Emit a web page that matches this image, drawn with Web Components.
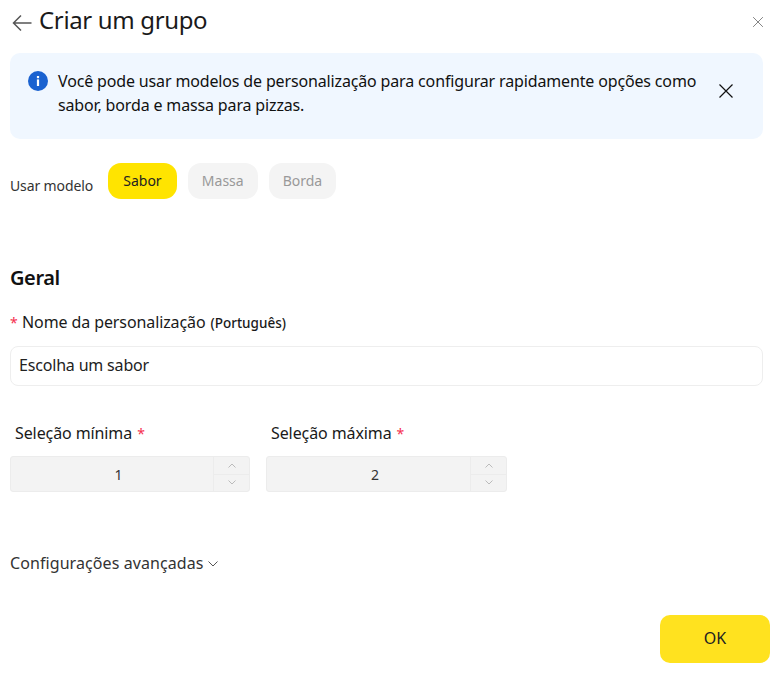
<!DOCTYPE html>
<html lang="pt">
<head>
<meta charset="utf-8">
<title>Criar um grupo</title>
<style>
html, body { margin: 0; padding: 0; background: #fff; }
body { font-family: "Noto Sans", sans-serif; color: #1a1a1a; }
</style>
</head>
<body>
<group-form></group-form>
<script>
const closeIcon = (size, color) => `<svg width="${size}" height="${size}" viewBox="0 0 16 16" fill="none" stroke="${color}" stroke-width="1.2"><path d="M1.5 1.5l13 13M14.5 1.5l-13 13"/></svg>`;

class PageHeader extends HTMLElement {
  constructor() {
    super();
    this.attachShadow({ mode: 'open' }).innerHTML = `
<style>
:host { display: flex; align-items: center; height: 44px; padding: 0 20px 0 11.5px; color: #1a1a1a; }
svg { display: block; }
.back { margin-right: 7.5px; margin-top: 2px; }
h1 { flex: 1; margin: -4px 0 0; font-size: 24px; font-weight: 400; line-height: 44px; letter-spacing: -.35px; }
</style>
<svg class="back" width="20" height="18" viewBox="0 0 20 18" fill="none" stroke="#555" stroke-width="1.5"><path d="M19.5 9H1.5M9 1.5L1.5 9L9 16.5"/></svg>
<h1><slot></slot></h1>
${closeIcon(12, '#777')}`;
  }
}

class InfoBanner extends HTMLElement {
  constructor() {
    super();
    this.attachShadow({ mode: 'open' }).innerHTML = `
<style>
:host { display: flex; box-sizing: border-box; width: 753px; height: 86px; margin: 9px 0 0 10px; padding: 16px 29px 0 18px; background: #f0f7ff; border-radius: 10px; color: #111; }
.icon { flex: none; margin: 2px 10px 0 0; }
.text { flex: 1; font-size: 16px; line-height: 24px; letter-spacing: -.15px; }
.close { flex: none; margin: 14px 0 0 0; }
svg { display: block; }
</style>
<svg class="icon" width="20" height="20" viewBox="0 0 20 20"><circle cx="10" cy="10" r="10" fill="#1a62d0"/><rect x="8.9" y="8.4" width="2.2" height="6.6" fill="#fff"/><rect x="8.9" y="5" width="2.2" height="2.2" fill="#fff"/></svg>
<div class="text"><slot></slot></div>
<div class="close">${closeIcon(16, '#111')}</div>`;
  }
}

class ChipButton extends HTMLElement {
  constructor() {
    super();
    this.attachShadow({ mode: 'open' }).innerHTML = `
<style>
:host { display: flex; align-items: center; justify-content: center; box-sizing: border-box; height: 36px; padding: 0 14px 2px; border-radius: 13px; background: #f4f4f4; color: #999; font-size: 14px; }
:host([active]) { background: #ffe400; color: #222; padding: 0 15.2px 2px; }
</style>
<slot></slot>`;
  }
}

class FieldLabel extends HTMLElement {
  constructor() {
    super();
    this.attachShadow({ mode: 'open' }).innerHTML = `
<style>
:host { display: block; font-size: 16px; line-height: 22px; letter-spacing: -.1px; color: #1a1a1a; }
</style>
<slot name="before"></slot><slot></slot>`;
  }
}

class NumberField extends HTMLElement {
  constructor() {
    super();
    this.attachShadow({ mode: 'open' }).innerHTML = `
<style>
:host { display: flex; box-sizing: border-box; height: 36px; background: #f3f3f3; border: 1px solid #ececec; border-radius: 3px; color: #333; font-size: 14px; }
.value { flex: 1; display: flex; align-items: center; justify-content: center; padding-left: 13px; }
.steps { flex: none; width: 35px; display: flex; flex-direction: column; border-left: 1px solid #ececec; }
.steps div { flex: 1; display: flex; align-items: center; justify-content: center; }
.steps div + div { border-top: 1px solid #ececec; }
svg { display: block; }
</style>
<div class="value"><slot></slot></div>
<div class="steps">
  <div><svg width="8" height="5" viewBox="0 0 8 5" fill="none" stroke="#bbb"><path d="M.5 4.5L4 1l3.5 3.5"/></svg></div>
  <div><svg width="8" height="5" viewBox="0 0 8 5" fill="none" stroke="#bbb"><path d="M.5.5L4 4 7.5.5"/></svg></div>
</div>`;
  }
}

class GroupForm extends HTMLElement {
  constructor() {
    super();
    this.attachShadow({ mode: 'open' }).innerHTML = `
<style>
:host { display: block; position: relative; width: 784px; height: 677px; overflow: hidden; font-family: "Noto Sans", sans-serif; }
.template { display: flex; align-items: center; gap: 11px; margin: 24px 0 0 10px; }
.template span { font-size: 14px; letter-spacing: -.12px; color: #333; margin: 8px 4px 0 0; }
h2 { margin: 61px 0 0 10px; font-size: 20px; font-weight: 600; line-height: 36px; letter-spacing: -.4px; color: #111; }
.name-label { margin: 15px 0 0 10px; display: flex; align-items: baseline; }
.name-label i { font-style: normal; color: #f5304f; font-size: 14px; width: 12px; }
.name-label small { font-size: 13.5px; font-weight: 500; margin-left: 5px; letter-spacing: 0; }
.input { box-sizing: border-box; width: 753px; height: 40px; margin: 12px 0 0 10px; padding: 0 8px 2px; display: flex; align-items: center; border: 1px solid #eee; border-radius: 8px; font-size: 16px; letter-spacing: -.18px; color: #222; }
.limits { display: flex; gap: 16px; margin: 36px 0 0 10px; }
.limit:first-child { width: 240px; }
.limit:last-child { width: 241px; }
.limit field-label { margin: 0 0 11px 5px; }
.limit i { font-style: normal; color: #f5304f; font-size: 14px; margin-left: 1px; }
.advanced { display: flex; align-items: center; margin: 60px 0 0 10px; font-size: 16px; letter-spacing: .08px; line-height: 22px; color: #333; }
.advanced svg { margin: 2px 0 0 5px; display: block; }
.footer { display: flex; justify-content: flex-end; margin: 41px 14px 0 0; }
.ok { display: flex; align-items: center; justify-content: center; box-sizing: border-box; width: 110px; height: 48px; padding-bottom: 2px; border-radius: 10px; background: #ffe21f; font-size: 16px; color: #222; }
</style>
<page-header>Criar um grupo</page-header>
<info-banner>Você pode usar modelos de personalização para configurar rapidamente opções como sabor, borda e massa para pizzas.</info-banner>
<div class="template">
  <span>Usar modelo</span>
  <chip-button active>Sabor</chip-button>
  <chip-button>Massa</chip-button>
  <chip-button>Borda</chip-button>
</div>
<h2>Geral</h2>
<field-label class="name-label"><i slot="before">*</i>Nome da personalização <small>(Português)</small></field-label>
<div class="input">Escolha um sabor</div>
<div class="limits">
  <div class="limit"><field-label>Seleção mínima <i>*</i></field-label><number-field>1</number-field></div>
  <div class="limit"><field-label>Seleção máxima <i>*</i></field-label><number-field>2</number-field></div>
</div>
<div class="advanced">Configurações avançadas<svg width="10" height="6" viewBox="0 0 10 6" fill="none" stroke="#555"><path d="M.5.5L5 5 9.5.5"/></svg></div>
<div class="footer"><div class="ok">OK</div></div>`;
  }
}

customElements.define('page-header', PageHeader);
customElements.define('info-banner', InfoBanner);
customElements.define('chip-button', ChipButton);
customElements.define('field-label', FieldLabel);
customElements.define('number-field', NumberField);
customElements.define('group-form', GroupForm);
</script>
</body>
</html>
